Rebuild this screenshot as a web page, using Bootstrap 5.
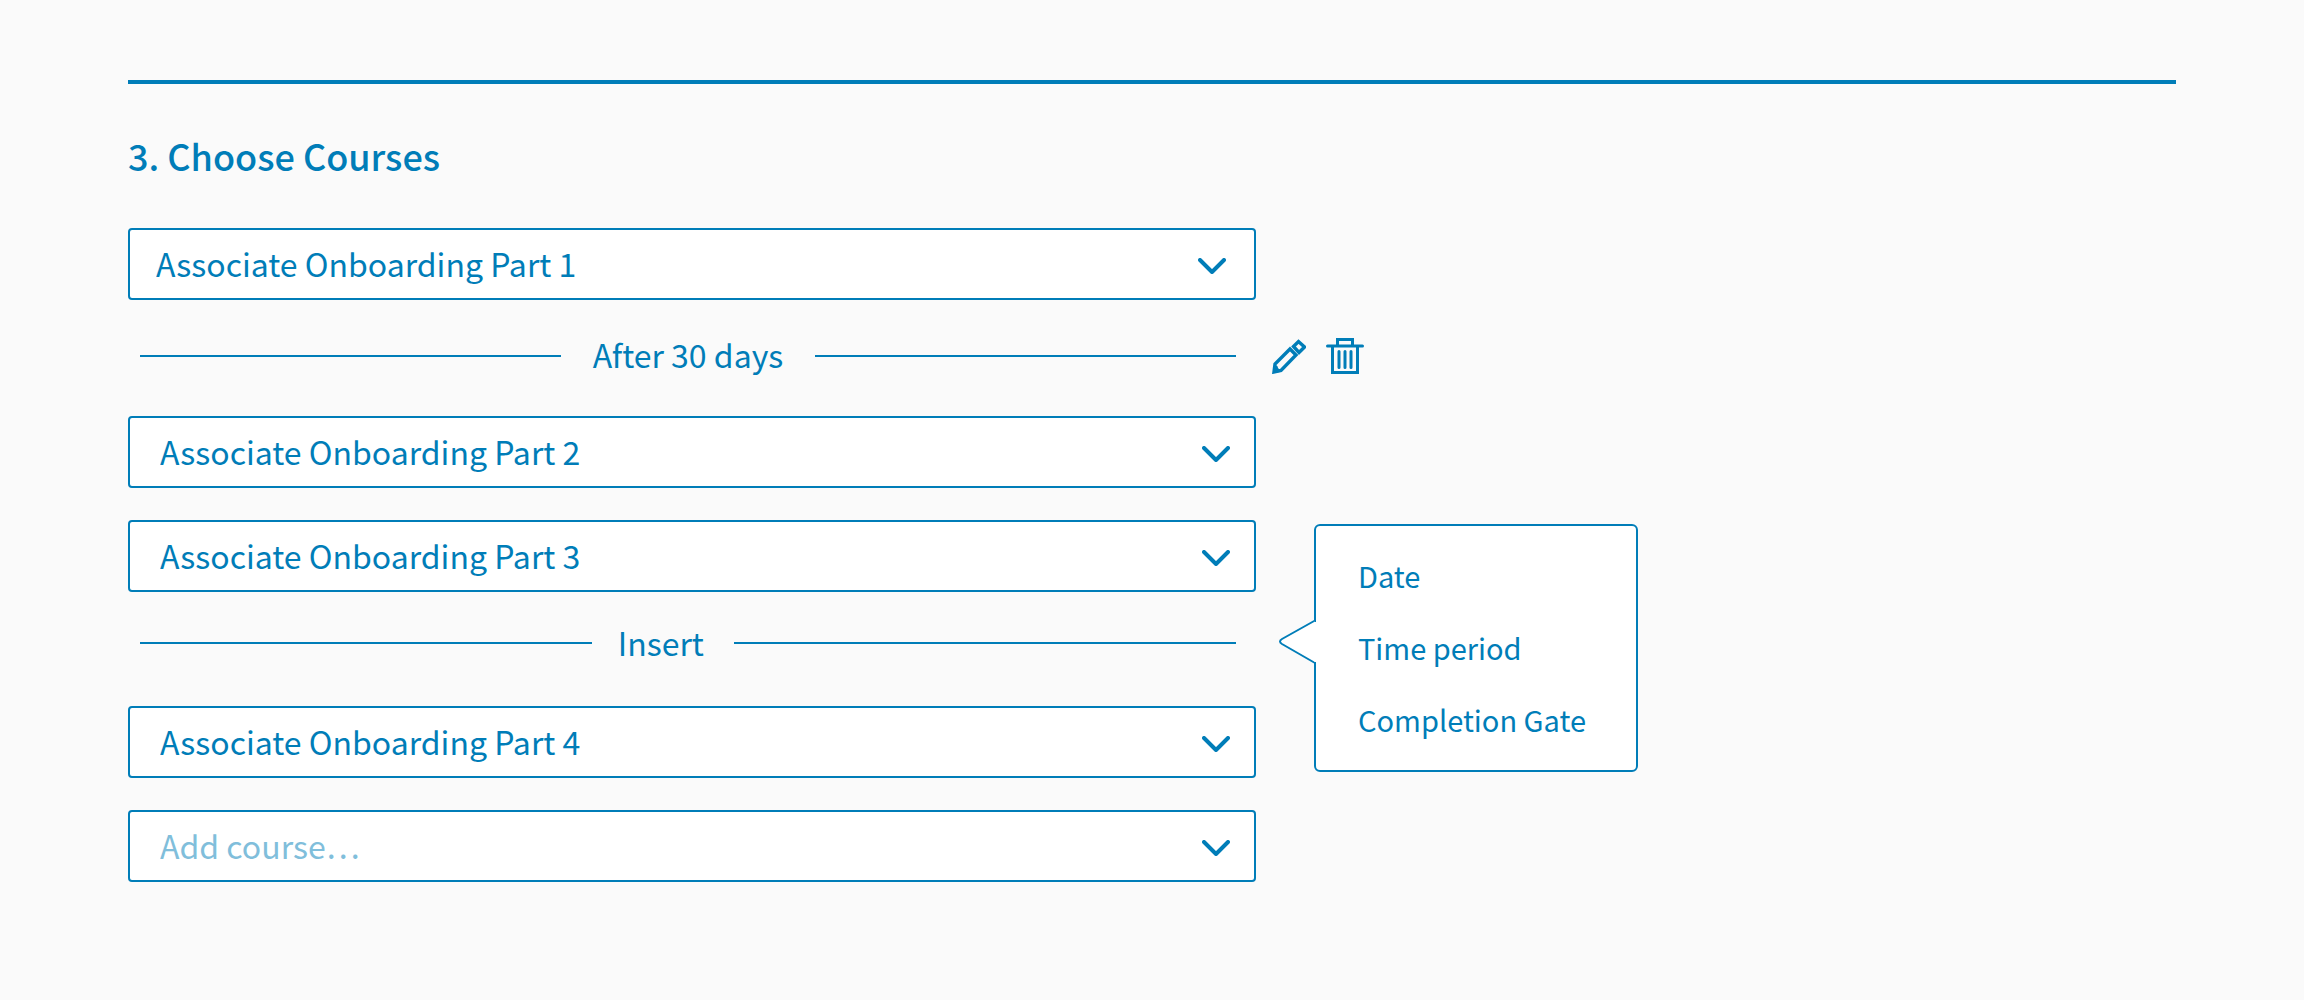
<!DOCTYPE html>
<html lang="en">
<head>
<meta charset="utf-8">
<meta name="viewport" content="width=device-width, initial-scale=1">
<title>Choose Courses</title>
<link href="https://cdn.jsdelivr.net/npm/bootstrap@5.3.0/dist/css/bootstrap.min.css" rel="stylesheet">
<style>
  :root { --brand: #007db8; }
  body {
    background: #fafafa;
    color: var(--brand);
    font-family: "Noto Sans CJK SC", "Noto Sans", sans-serif;
    font-size: 32px;
    line-height: 48px;
  }
  .page { padding: 80px 128px; }
  .section-rule { border-top: 4px solid var(--brand); opacity: 1; }
  .section-title { font-size: 36px; line-height: 48px; font-weight: 500; padding: 47px 0 49px; }
  .course-col { width: 100%; max-width: 1128px; }
  .course-select {
    height: 72px;
    padding: 0 80px 3px 30px;
    border: 2px solid var(--brand);
    border-radius: 4px;
    color: var(--brand);
    font-size: 32px;
    line-height: 48px;
    background-color: #fff;
    background-image: url("data:image/svg+xml,%3Csvg xmlns='http://www.w3.org/2000/svg' viewBox='0 0 28 16'%3E%3Cpath d='M2 2l12 12L26 2' fill='none' stroke='%23007db8' stroke-width='4' stroke-linecap='round' stroke-linejoin='round'/%3E%3C/svg%3E");
    background-size: 28px 16px;
    background-position: right 24px top 28px;
  }
  .course-select.is-first { padding-left: 26px; background-position: right 28px top 28px; }
  .course-select.is-empty { color: #80bedb; }
  .course-select + .course-select { margin-top: 32px; }
  .delay-block { padding: 32px 0 36px; }
  .insert-block { padding: 27px 0 39px; }
  .gap-row { padding: 0 20px 0 12px; height: 48px; }
  .gap-line { height: 2px; background: var(--brand); flex: 1 1 0; }
  .gap-line.before-insert { flex-grow: 9; }
  .gap-line.after-insert { flex-grow: 10; }
  .gap-label { color: var(--brand); font-size: 32px; line-height: 48px; padding: 0 32px 4px; }
  .gap-label.is-insert { padding: 0 30px 2px 26px; }
  .row-tools { left: 100%; top: 38px; padding-left: 16px; gap: 20px; }
  .row-tools svg, .insert-menu svg { display: block; }
  .insert-menu {
    left: 100%;
    top: -68px;
    margin-left: 58px;
    width: 324px;
    padding: 25px 0 27px 42px;
    background: #fff;
    border: 2px solid var(--brand);
    border-radius: 6px;
  }
  .insert-menu .menu-arrow { left: -38px; top: 93px; }
  .insert-menu button { color: var(--brand); font-size: 29px; line-height: 48px; }
</style>
</head>
<body>
<main class="page">
  <hr class="section-rule m-0">
  <h2 class="section-title m-0">3. Choose Courses</h2>

  <form class="course-col d-flex flex-column">
    <select class="form-select course-select is-first" aria-label="Course 1"><option>Associate Onboarding Part 1</option></select>

    <div class="delay-block position-relative">
      <div class="gap-row d-flex align-items-center">
        <span class="gap-line"></span>
        <span class="gap-label">After 30 days</span>
        <span class="gap-line"></span>
      </div>
      <div class="row-tools position-absolute d-flex">
        <button type="button" class="btn p-0 border-0" aria-label="Edit delay">
          <svg width="34" height="36" viewBox="0 0 34 36" fill="none" stroke="#007db8" stroke-width="3.400"><path d="M2 34l1-8L18 11l6 6L9 32.500z"/><path d="M21.500 8.500l5-5 6 5.500-5.500 5.500z"/><path d="M1 35l1-8q4 0 4 3 2 1 2 4z" fill="#007db8" stroke="none"/></svg>
        </button>
        <button type="button" class="btn p-0 border-0" aria-label="Delete delay">
          <svg width="38" height="36" viewBox="0 0 38 36" fill="none" stroke="#007db8" stroke-width="3" stroke-linecap="round"><path d="M1.500 8h35M11.500 7V1.500h15V7M6.500 8v26.500h25V8M13 13.500v16M19 13.500v16M25 13.500v16"/></svg>
        </button>
      </div>
    </div>

    <select class="form-select course-select" aria-label="Course 2"><option>Associate Onboarding Part 2</option></select>
    <select class="form-select course-select" aria-label="Course 3"><option>Associate Onboarding Part 3</option></select>

    <div class="insert-block position-relative">
      <div class="gap-row d-flex align-items-center">
        <span class="gap-line before-insert"></span>
        <button type="button" class="btn border-0 gap-label is-insert">Insert</button>
        <span class="gap-line after-insert"></span>
      </div>
      <div class="insert-menu position-absolute d-flex flex-column align-items-start gap-4">
        <svg class="menu-arrow position-absolute" width="39" height="46" viewBox="0 0 39 46"><path d="M37 1.500L4 20q-4 2.500 0 5L37 44" fill="#fff" stroke="#007db8" stroke-width="2"/><path d="M36.500 3v40h2.500V3z" fill="#fff"/></svg>
        <button type="button" class="btn border-0 p-0">Date</button>
        <button type="button" class="btn border-0 p-0">Time period</button>
        <button type="button" class="btn border-0 p-0">Completion Gate</button>
      </div>
    </div>

    <select class="form-select course-select" aria-label="Course 4"><option>Associate Onboarding Part 4</option></select>
    <select class="form-select course-select is-empty" aria-label="Add course"><option>Add course…</option></select>
  </form>
</main>
<script src="https://cdn.jsdelivr.net/npm/bootstrap@5.3.0/dist/js/bootstrap.bundle.min.js"></script>
</body>
</html>
